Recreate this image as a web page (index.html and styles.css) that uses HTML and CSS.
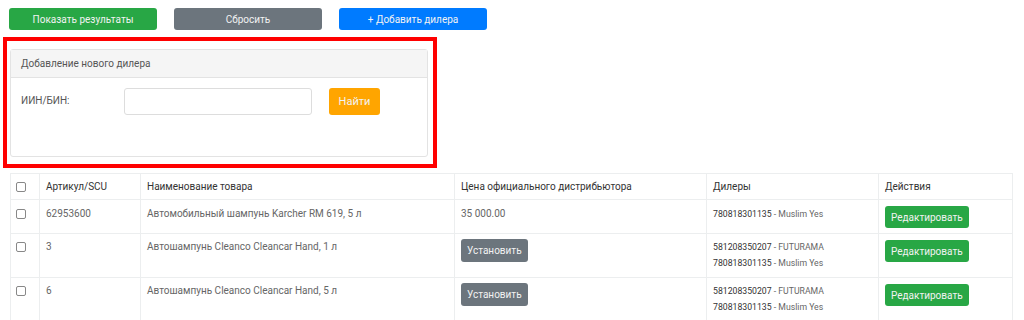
FILE: index.html
```html
<!DOCTYPE html>
<html lang="ru">
<head>
<meta charset="utf-8">
<link rel="stylesheet" href="styles.css">
</head>
<body>
<div class="toolbar">
  <button class="btn btn-green btn-wide">Показать результаты</button>
  <button class="btn btn-gray btn-wide">Сбросить</button>
  <button class="btn btn-blue btn-wide">+ Добавить дилера</button>
</div>

<div class="highlight">
  <div class="panel">
    <div class="panel-head">Добавление нового дилера</div>
    <div class="panel-body">
      <label class="field-label">ИИН/БИН:</label>
      <input class="field-input" type="text">
      <button class="btn btn-orange btn-find">Найти</button>
    </div>
  </div>
</div>

<table class="grid">
  <colgroup>
    <col class="c1"><col class="c2"><col class="c3"><col class="c4"><col class="c5"><col class="c6">
  </colgroup>
  <thead>
    <tr>
      <th><span class="check"></span></th>
      <th>Артикул/SCU</th>
      <th>Наименование товара</th>
      <th>Цена официального дистрибьютора</th>
      <th>Дилеры</th>
      <th>Действия</th>
    </tr>
  </thead>
  <tbody>
    <tr class="r1">
      <td><span class="check"></span></td>
      <td>62953600</td>
      <td>Автомобильный шампунь Karcher RM 619, 5 л</td>
      <td>35 000.00</td>
      <td class="dealers"><div><b>780818301135</b> - Muslim Yes</div></td>
      <td><button class="btn btn-green btn-sm btn-edit">Редактировать</button></td>
    </tr>
    <tr class="r2">
      <td><span class="check"></span></td>
      <td>3</td>
      <td>Автошампунь Cleanco Cleancar Hand, 1 л</td>
      <td><button class="btn btn-gray btn-sm">Установить</button></td>
      <td class="dealers"><div><b>581208350207</b> - FUTURAMA</div><div><b>780818301135</b> - Muslim Yes</div></td>
      <td><button class="btn btn-green btn-sm btn-edit">Редактировать</button></td>
    </tr>
    <tr class="r2">
      <td><span class="check"></span></td>
      <td>6</td>
      <td>Автошампунь Cleanco Cleancar Hand, 5 л</td>
      <td><button class="btn btn-gray btn-sm">Установить</button></td>
      <td class="dealers"><div><b>581208350207</b> - FUTURAMA</div><div><b>780818301135</b> - Muslim Yes</div></td>
      <td><button class="btn btn-green btn-sm btn-edit">Редактировать</button></td>
    </tr>
  </tbody>
</table>
</body>
</html>
```

FILE: styles.css
```css
* { box-sizing: border-box; }
html, body { margin: 0; padding: 0; background: #fff; }
body {
  font-family: Roboto, "Liberation Sans", Arial, sans-serif;
  font-size: 10px;
  color: #666;
  width: 1024px;
  overflow: hidden;
}
.toolbar {
  display: flex;
  gap: 17px;
  padding: 8px 0 0 9px;
}
.btn {
  font-family: inherit;
  border: 0;
  border-radius: 3px;
  color: #f2f2f2;
  font-size: 10px;
  cursor: pointer;
  padding: 0;
}
.btn-wide { width: 148px; height: 22px; }
.btn-green { background: #28a745; }
.btn-gray { background: #6c757d; }
.btn-blue { background: #007bff; }
.btn-orange { background: #ffa500; }

.highlight {
  margin: 7px 0 0 3px;
  width: 434px;
  border: 4px solid #ff0000;
  padding: 8px 5px 7px 3px;
}
.panel {
  border: 1px solid #e3e3e3;
  border-radius: 3px;
  height: 108px;
}
.panel-head {
  background: #f5f5f5;
  border-bottom: 1px solid #e3e3e3;
  height: 28px;
  line-height: 27px;
  padding-left: 10px;
  color: #555;
}
.panel-body {
  display: flex;
  align-items: flex-start;
  padding: 10px 10px 0 10px;
}
.field-label {
  width: 103px;
  padding-top: 7px;
  color: #555;
}
.field-input {
  width: 188px;
  height: 27px;
  border: 1px solid #ddd;
  border-radius: 3px;
}
.btn-find {
  margin-left: 17px;
  width: 51px;
  height: 27px;
  font-size: 11px;
}

.grid {
  margin: 5px 0 0 10px;
  width: 1002px;
  border-collapse: collapse;
  table-layout: fixed;
}
.c1 { width: 29px; }
.c2 { width: 101px; }
.c3 { width: 314px; }
.c4 { width: 252px; }
.c5 { width: 172px; }
.c6 { width: 134px; }
.grid th, .grid td {
  border: 1px solid #eceeef;
  padding: 5px 6px 4px;
  text-align: left;
  vertical-align: top;
  line-height: 16px;
}
.grid th {
  font-weight: 400;
  color: #333;
  height: 26px;
}
.grid td { color: #666; }
.grid tbody tr.r1 td { height: 34px; padding-top: 6px; }
.grid tbody tr.r2 td { height: 44px; }
.check {
  display: inline-block;
  width: 10px;
  height: 10px;
  border: 1px solid #888;
  border-radius: 2px;
  margin: 3px 0 0 -1px;
  vertical-align: top;
}
.dealers { font-size: 8.7px; color: #888; }
.dealers b { font-weight: 400; color: #333; }
.btn-sm {
  display: block;
  height: 23px;
  padding: 0 6px;
  font-size: 10px;
}
.btn-edit { height: 22px; margin-top: 1px; }
.r1 .btn-edit { margin-top: 0; }
```
